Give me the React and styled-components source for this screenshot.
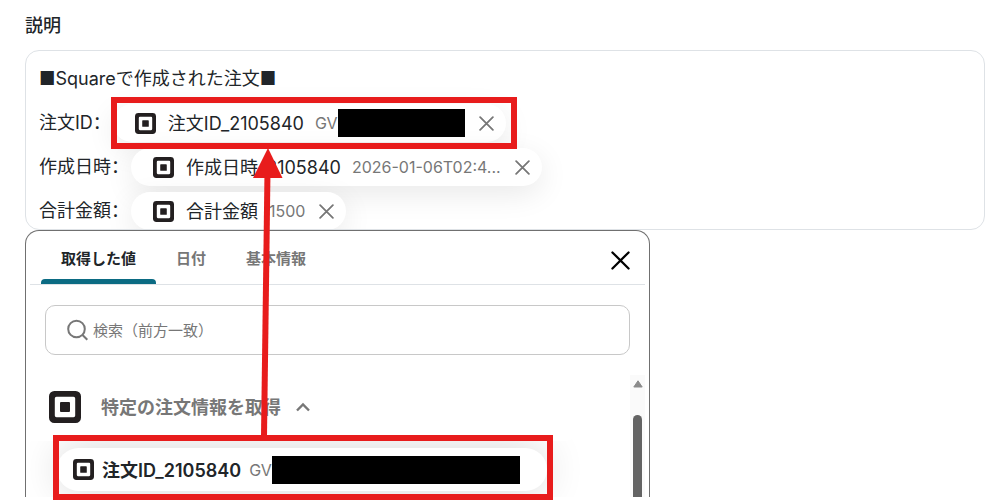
import React from "react";
import styled, { createGlobalStyle, css } from "styled-components";

const GlobalStyle = createGlobalStyle`
  *, *::before, *::after { box-sizing: border-box; }
  body {
    margin: 0;
    background: #fff;
    color: #212529;
    font-family: Inter, "Noto Sans CJK JP", sans-serif;
    font-size: 18px;
  }
  button, input { font: inherit; color: inherit; }
  svg { flex: none; }
`;

const Page = styled.main`
  position: relative;
  min-height: 100vh;
  padding: 12px 15px 0 25px;
`;

const FieldLabel = styled.div`
  font-weight: 500;
  line-height: 28px;
  margin-bottom: 10px;
`;

const Field = styled.div`
  display: flex;
  flex-direction: column;
  gap: 6px;
  height: 180px;
  padding: 14px 13px 0;
  border: 1px solid #dee2e6;
  border-radius: 14px;
  overflow: hidden;
  outline: none;
`;

const Line = styled.div`
  display: flex;
  align-items: center;
  gap: 2px;
  line-height: 28px;
  white-space: nowrap;
`;

const TitleLine = styled(Line)`
  margin-bottom: 5px;
`;

const ChipLine = styled(Line)`
  height: 38px;
`;

const LineText = styled.span`
  padding-bottom: 3px;
`;

const Colon = styled.span`
  font-family: "Noto Sans CJK SC", sans-serif;
`;

const Chip = styled.span`
  position: relative;
  display: flex;
  align-items: center;
  height: 38px;
  padding: 0 12px 0 22px;
  border-radius: 19px;
  background: #fff;
  box-shadow: 0 8px 30px rgba(0, 0, 0, 0.09);
`;

const ChipName = styled.span`
  margin: 0 11px 0 12px;
  padding-top: 2px;
`;

const ChipValue = styled.span`
  display: flex;
  align-items: center;
  margin-right: 14px;
  font-size: 16px;
  color: #777;
`;

const Redaction = styled.span`
  flex: none;
  width: ${(p) => p.$width}px;
  height: 28px;
  background: #000;
`;

const IconButton = styled.button`
  display: flex;
  padding: 0;
  border: 0;
  background: none;
  cursor: pointer;
  color: ${(p) => (p.$strong ? "#000" : "#777")};
`;

const highlight = css`
  content: "";
  position: absolute;
  z-index: 3;
  border: 6px solid #e81c1c;
  pointer-events: none;
`;

const HighlightedChip = styled(Chip)`
  &::after {
    ${highlight}
    inset: -7px -11px -7px -2px;
  }
`;

const Popup = styled.section`
  position: relative;
  max-width: 625px;
  padding: 0 4px;
  border: 1px solid #707070;
  border-bottom: 0;
  border-radius: 14px 14px 0 0;
  background: #fff;
`;

const PopupHeader = styled.header`
  display: flex;
  align-items: flex-end;
  justify-content: space-between;
  height: 54px;
  padding: 0 15px 0 11px;
  border-bottom: 1px solid #dee2e6;
`;

const CloseButton = styled(IconButton)`
  margin-bottom: 14px;
`;

const Tabs = styled.div`
  display: flex;
  align-self: stretch;
`;

const Tab = styled.button`
  padding: 0 20px;
  border: 0;
  background: none;
  font-size: 15px;
  font-weight: 600;
  color: ${(p) => (p.$active ? "#212529" : "#777")};
  position: relative;
  cursor: pointer;

  &::after {
    content: "";
    display: ${(p) => (p.$active ? "block" : "none")};
    position: absolute;
    inset: auto 0 0;
    height: 5px;
    border-radius: 4px 4px 0 0;
    background: #0b6b83;
  }
`;

const SearchBox = styled.label`
  display: flex;
  align-items: center;
  gap: 4px;
  height: 50px;
  margin: 20px 15px;
  padding: 0 20px;
  border: 1px solid #c8c8c8;
  border-radius: 10px;
  color: #777;
`;

const SearchInput = styled.input`
  flex: 1;
  min-width: 0;
  padding: 0;
  border: 0;
  outline: none;
  background: none;
  font-size: 15px;

  &::placeholder { color: #777; opacity: 1; }
`;

const Results = styled.div`
  display: flex;
  height: 122px;
`;

const ResultList = styled.div`
  flex: 1;
  min-width: 0;
`;

const GroupButton = styled.button`
  position: relative;
  z-index: 1;
  display: flex;
  align-items: center;
  width: calc(100% - 48px);
  height: 66px;
  padding: 0 19px 2px;
  border: 0;
  border-radius: 0 0 18px 0;
  background: #fff;
  color: #777;
  font-weight: 600;
  cursor: pointer;
`;

const GroupName = styled.span`
  margin: 0 15px 0 20px;
  padding-bottom: 2px;
`;

const Items = styled.div`
  height: 59px;
  margin-top: -3px;
  padding: 10px 83px 0 27px;
  overflow: hidden;
`;

const ItemChip = styled.button`
  display: flex;
  align-items: center;
  width: 100%;
  height: 43px;
  padding: 0 16px;
  border: 0;
  border-radius: 22px;
  background: #fff;
  box-shadow: 0 0 40px rgba(0, 0, 0, 0.16);
  white-space: nowrap;
  cursor: pointer;
`;

const ItemName = styled.span`
  margin: 0 8px;
  padding-bottom: 2px;
  font-weight: 600;
`;

const ItemFrame = styled.div`
  position: relative;

  &::after {
    ${highlight}
    inset: auto 77px -3px 23px;
    height: 65px;
  }
`;

const ScrollTrack = styled.div`
  display: flex;
  flex-direction: column;
  align-items: center;
  gap: 27px;
  width: 15px;
  padding-top: 5px;
  background: #fafafa;
`;

const ScrollThumb = styled.div`
  flex: 1;
  width: 9px;
  border-radius: 5px 5px 0 0;
  background: #636363;
`;

const Arrow = styled.svg`
  position: absolute;
  z-index: 4;
  left: 250px;
  top: 147px;
  pointer-events: none;
`;

const SquareLogo = ({ size = 21 }) => (
  <svg width={size} height={size} viewBox="0 0 32 32" aria-hidden="true">
    <path
      fill="#231f20"
      fillRule="evenodd"
      d="M5.3 0h21.4A5.3 5.3 0 0 1 32 5.3v21.4a5.3 5.3 0 0 1-5.3 5.3H5.3A5.3 5.3 0 0 1 0 26.7V5.3A5.3 5.3 0 0 1 5.3 0ZM7.5 5.8a1.7 1.7 0 0 0-1.7 1.7v17a1.7 1.7 0 0 0 1.7 1.7h17a1.7 1.7 0 0 0 1.7-1.7v-17a1.7 1.7 0 0 0-1.7-1.7Z"
    />
    <rect x="11" y="11" width="10" height="10" rx="1" fill="#231f20" />
  </svg>
);

const Cross = ({ size = 15 }) => (
  <svg width={size} height={size} viewBox="0 0 16 16" aria-hidden="true">
    <path d="M1.2 1.2 14.8 14.8M14.8 1.2 1.2 14.8" fill="none" stroke="currentColor" strokeWidth="1.9" strokeLinecap="round" />
  </svg>
);

const chips = [
  { label: "注文ID", name: "注文ID_2105840", value: "GV", hidden: 127, marked: true },
  { label: "作成日時", name: "作成日時_2105840", value: "2026-01-06T02:4..." },
  { label: "合計金額", name: "合計金額", value: "1500" },
];

const tabs = ["取得した値", "日付", "基本情報"];

export default function App() {
  return (
    <Page>
      <GlobalStyle />
      <FieldLabel id="description-label">説明</FieldLabel>
      <Field role="textbox" aria-multiline="true" aria-labelledby="description-label">
        <TitleLine>■Squareで作成された注文■</TitleLine>
        {chips.map((c) => {
          const ChipBox = c.marked ? HighlightedChip : Chip;
          return (
            <ChipLine key={c.label}>
              <LineText>
                {c.label}
                <Colon>：</Colon>
              </LineText>
              <ChipBox>
                <SquareLogo />
                <ChipName>{c.name}</ChipName>
                <ChipValue>
                  {c.value}
                  {c.hidden && <Redaction $width={c.hidden} />}
                </ChipValue>
                <IconButton type="button" aria-label="削除">
                  <Cross />
                </IconButton>
              </ChipBox>
            </ChipLine>
          );
        })}
      </Field>
      <Popup>
        <PopupHeader>
          <Tabs role="tablist">
            {tabs.map((t, i) => (
              <Tab key={t} type="button" role="tab" aria-selected={i === 0} $active={i === 0}>
                {t}
              </Tab>
            ))}
          </Tabs>
          <CloseButton type="button" aria-label="閉じる" $strong>
            <Cross size={19} />
          </CloseButton>
        </PopupHeader>
        <SearchBox>
          <svg width="23" height="23" viewBox="0 0 23 23" fill="none" stroke="currentColor" strokeWidth="2" aria-hidden="true">
            <circle cx="10.5" cy="10" r="8.3" />
            <path d="m16.3 15.8 5 5" />
          </svg>
          <SearchInput type="search" placeholder="検索（前方一致）" aria-label="検索（前方一致）" />
        </SearchBox>
        <Results>
          <ResultList>
            <GroupButton type="button" aria-expanded="true">
              <SquareLogo size={32} />
              <GroupName>特定の注文情報を取得</GroupName>
              <svg width="14" height="10" viewBox="0 0 14 10" fill="none" stroke="currentColor" strokeWidth="2.4" aria-hidden="true">
                <path d="m1 8.5 6-6 6 6" />
              </svg>
            </GroupButton>
            <ItemFrame>
              <Items>
                <ItemChip type="button">
                  <SquareLogo />
                  <ItemName>注文ID_2105840</ItemName>
                  <ChipValue>
                    GV
                    <Redaction $width={248} />
                  </ChipValue>
                </ItemChip>
              </Items>
            </ItemFrame>
          </ResultList>
          <ScrollTrack>
            <svg width="10" height="8" viewBox="0 0 10 8" aria-hidden="true">
              <path d="M5 0.8 9.2 7H0.8Z" fill="#8b8b8b" stroke="#8b8b8b" strokeLinejoin="round" />
            </svg>
            <ScrollThumb />
          </ScrollTrack>
        </Results>
      </Popup>
      <Arrow width="36" height="292" viewBox="0 0 36 292" aria-hidden="true">
        <path d="M17.5 24 14 289" stroke="#e81c1c" strokeWidth="6" fill="none" />
        <path d="M18 1 32.5 31H3Z" fill="#e81c1c" />
      </Arrow>
    </Page>
  );
}
